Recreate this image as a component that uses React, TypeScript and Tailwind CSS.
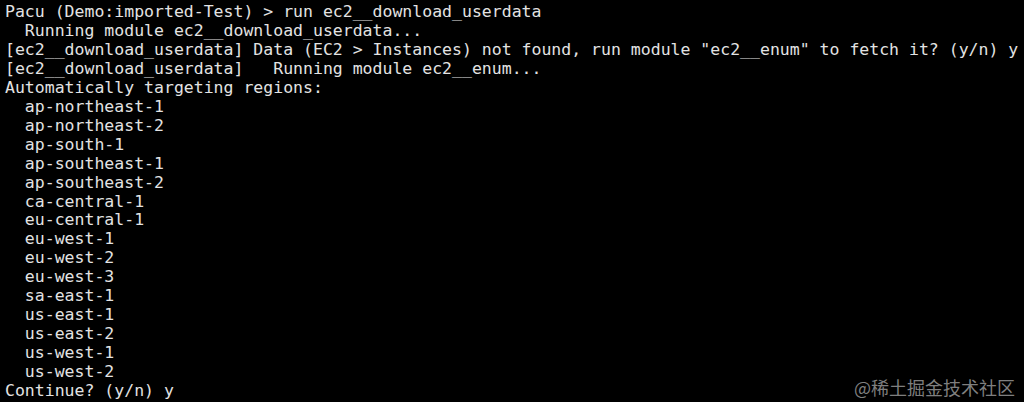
const lines = [
  "Pacu (Demo:imported-Test) > run ec2__download_userdata",
  "  Running module ec2__download_userdata...",
  '[ec2__download_userdata] Data (EC2 > Instances) not found, run module "ec2__enum" to fetch it? (y/n) y',
  "[ec2__download_userdata]   Running module ec2__enum...",
  "Automatically targeting regions:",
  "  ap-northeast-1",
  "  ap-northeast-2",
  "  ap-south-1",
  "  ap-southeast-1",
  "  ap-southeast-2",
  "  ca-central-1",
  "  eu-central-1",
  "  eu-west-1",
  "  eu-west-2",
  "  eu-west-3",
  "  sa-east-1",
  "  us-east-1",
  "  us-east-2",
  "  us-west-1",
  "  us-west-2",
  "Continue? (y/n) y",
];

const App = () => {
  return (
    <div className="relative w-[1024px] h-[402px] overflow-hidden bg-black">
      <div className="flex flex-col items-start pl-[5px] pt-[3px] font-['DejaVu_Sans_Mono',monospace] text-[16.5px] leading-[18.95px] text-[#e3e3e3]">
        {lines.map((line, i) => (
          <div key={i} className="whitespace-pre">
            {line}
          </div>
        ))}
      </div>

      {/* watermark */}
      <div className="absolute right-[9px] bottom-[6px] font-['Noto_Sans_CJK_SC',sans-serif] text-[18px] leading-none text-[#7f7f7f]">
        @稀土掘金技术社区
      </div>
    </div>
  );
};

export default App;
